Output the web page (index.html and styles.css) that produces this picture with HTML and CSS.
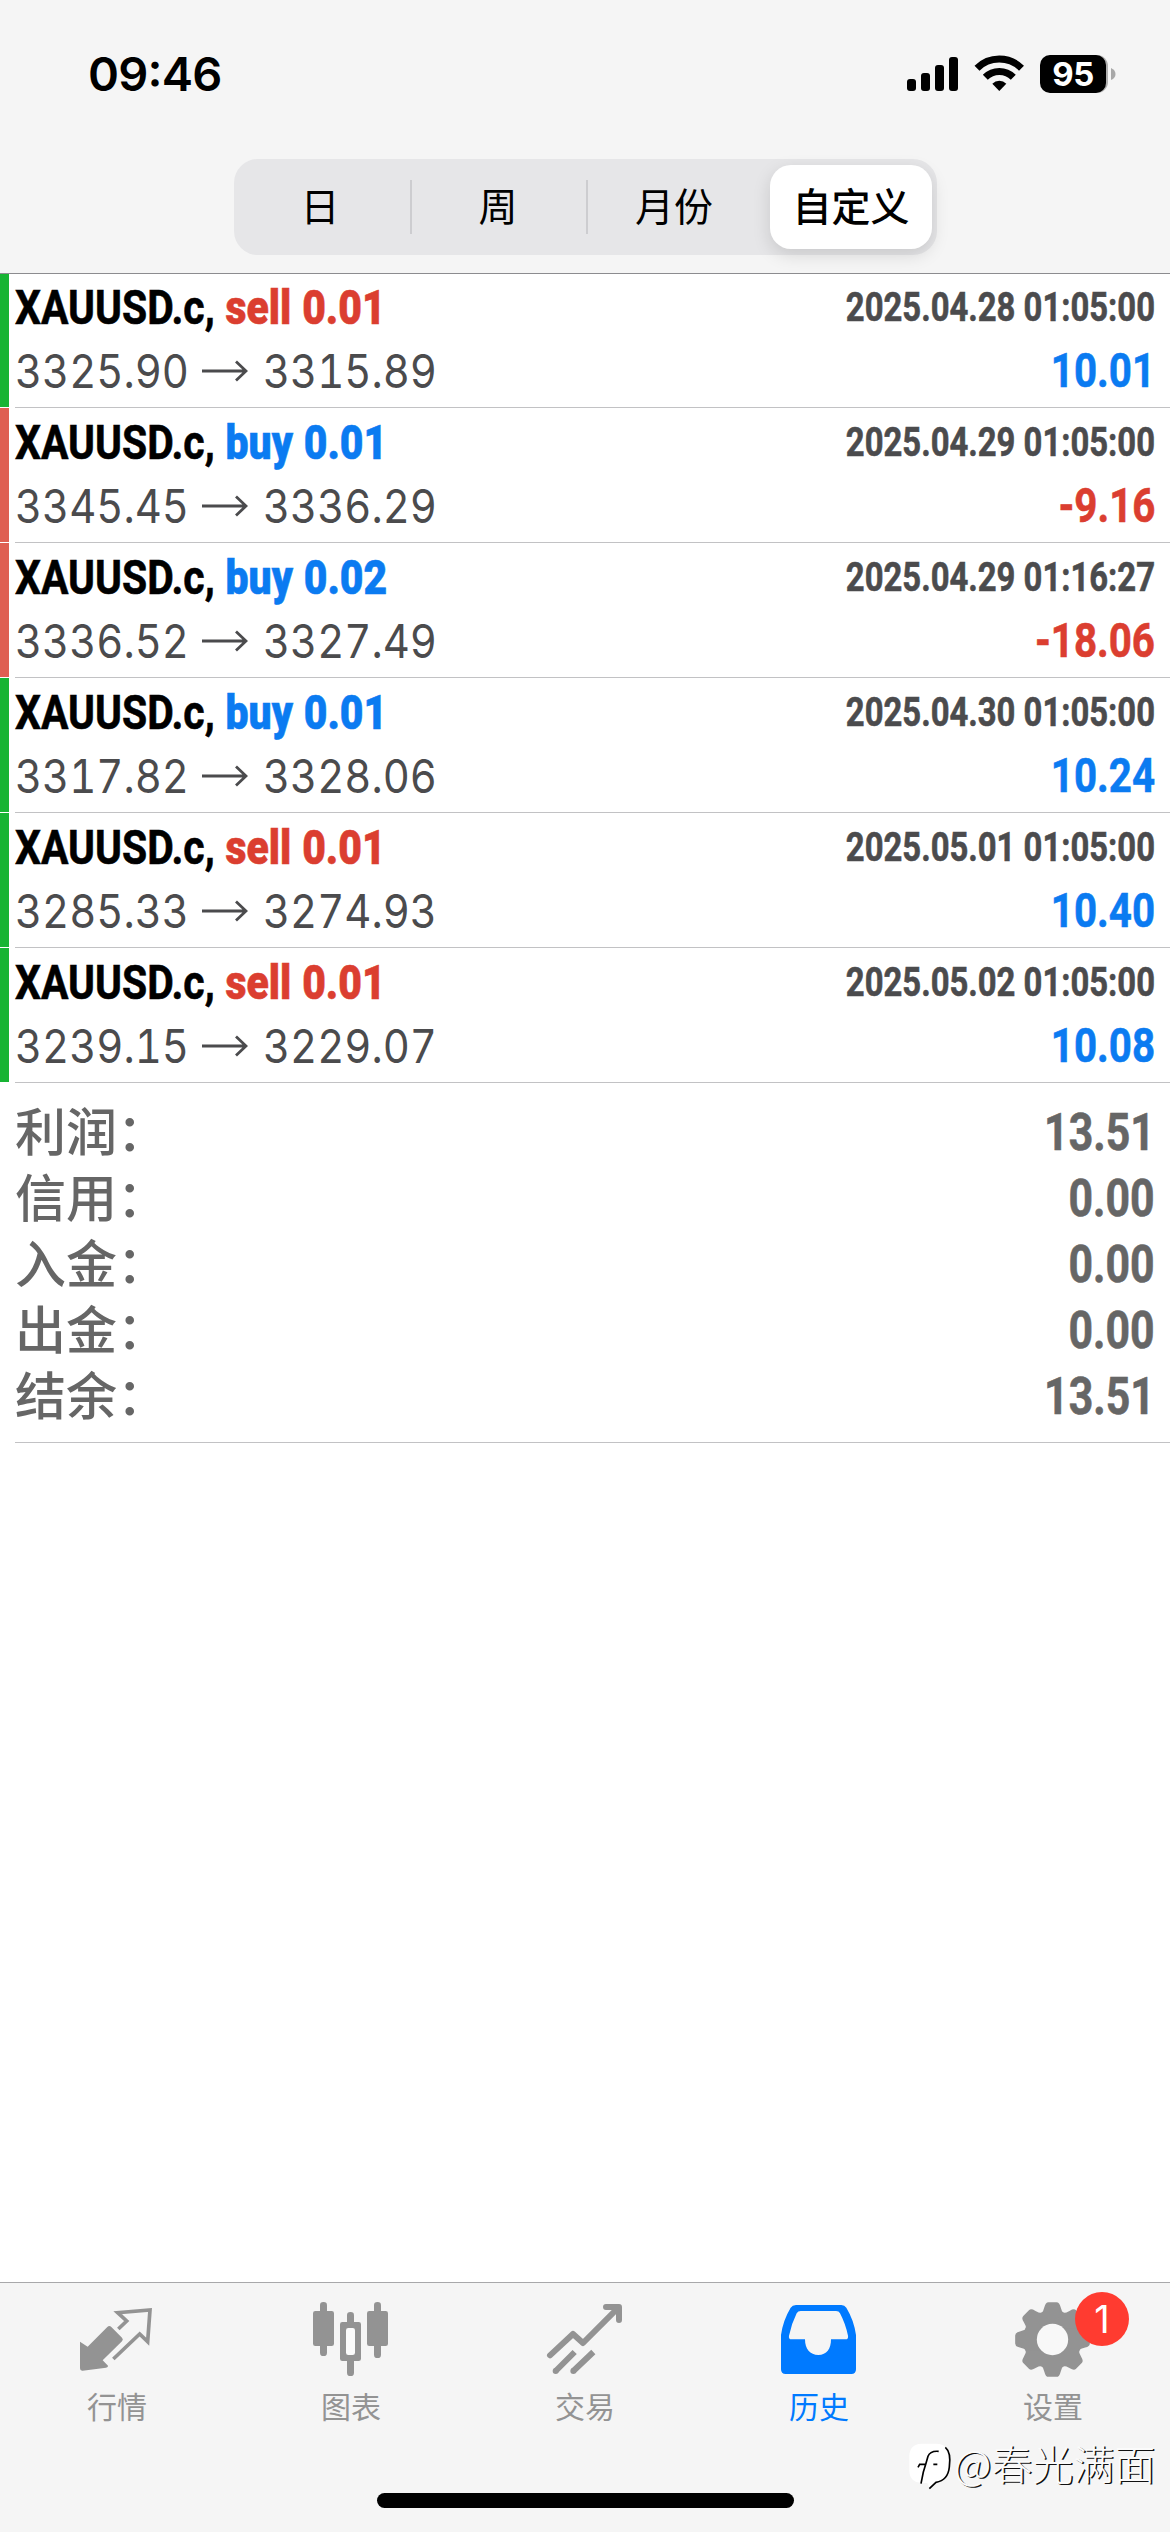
FILE: index.html
```html
<!DOCTYPE html>
<html lang="zh-CN">
<head>
<meta charset="utf-8">
<title>历史</title>
<link rel="stylesheet" href="styles.css">
</head>
<body>
<div class="screen">
  <header class="top">
    <div class="status">
      <span class="clock">09:46</span>
      <svg class="status-icons" width="210" height="40" viewBox="906 54 210 40">
        <rect x="907" y="79" width="9" height="12" rx="3"/>
        <rect x="921" y="73" width="9" height="18" rx="3"/>
        <rect x="935" y="65" width="9" height="26" rx="3"/>
        <rect x="949" y="57" width="9" height="34" rx="3"/>
        <g fill="none" stroke="#000" stroke-width="7">
          <path d="M977 68.200a31.500 31.500 0 0 1 44.500 0"/>
          <path d="M985.300 77.200a19.800 19.800 0 0 1 28 0"/>
        </g>
        <path d="M999.300 91l-7-7.300a10 10 0 0 1 14 0z"/>
        <rect x="1042" y="55" width="66" height="38" rx="11" fill="#b0b0b0"/>
        <rect x="1040" y="55" width="66" height="38" rx="10"/>
        <path d="M1111 68q4.500 2 4.500 6t-4.500 6z" fill="#a8a8a8"/>
        <text class="battery" x="1073" y="86" text-anchor="middle">95</text>
      </svg>
    </div>
    <nav class="segments">
      <span class="segment">日</span>
      <span class="segment ruled">周</span>
      <span class="segment ruled">月份</span>
      <span class="segment selected">自定义</span>
    </nav>
  </header>

  <main class="history">
    <section class="deal gain">
      <div class="line"><h2 class="symbol">XAUUSD.c, <b class="sell">sell 0.01</b></h2><time class="time">2025.04.28 01:05:00</time></div>
      <div class="line"><p class="prices"><span>3325.90</span><svg class="arrow" viewBox="0 0 46 22"><path d="M0 11H44M34 1.500L44 11L34 20.500"/></svg><span>3315.89</span></p><strong class="profit up">10.01</strong></div>
    </section>
    <section class="deal loss">
      <div class="line"><h2 class="symbol">XAUUSD.c, <b class="buy">buy 0.01</b></h2><time class="time">2025.04.29 01:05:00</time></div>
      <div class="line"><p class="prices"><span>3345.45</span><svg class="arrow" viewBox="0 0 46 22"><path d="M0 11H44M34 1.500L44 11L34 20.500"/></svg><span>3336.29</span></p><strong class="profit down">-9.16</strong></div>
    </section>
    <section class="deal loss">
      <div class="line"><h2 class="symbol">XAUUSD.c, <b class="buy">buy 0.02</b></h2><time class="time">2025.04.29 01:16:27</time></div>
      <div class="line"><p class="prices"><span>3336.52</span><svg class="arrow" viewBox="0 0 46 22"><path d="M0 11H44M34 1.500L44 11L34 20.500"/></svg><span>3327.49</span></p><strong class="profit down">-18.06</strong></div>
    </section>
    <section class="deal gain">
      <div class="line"><h2 class="symbol">XAUUSD.c, <b class="buy">buy 0.01</b></h2><time class="time">2025.04.30 01:05:00</time></div>
      <div class="line"><p class="prices"><span>3317.82</span><svg class="arrow" viewBox="0 0 46 22"><path d="M0 11H44M34 1.500L44 11L34 20.500"/></svg><span>3328.06</span></p><strong class="profit up">10.24</strong></div>
    </section>
    <section class="deal gain">
      <div class="line"><h2 class="symbol">XAUUSD.c, <b class="sell">sell 0.01</b></h2><time class="time">2025.05.01 01:05:00</time></div>
      <div class="line"><p class="prices"><span>3285.33</span><svg class="arrow" viewBox="0 0 46 22"><path d="M0 11H44M34 1.500L44 11L34 20.500"/></svg><span>3274.93</span></p><strong class="profit up">10.40</strong></div>
    </section>
    <section class="deal gain">
      <div class="line"><h2 class="symbol">XAUUSD.c, <b class="sell">sell 0.01</b></h2><time class="time">2025.05.02 01:05:00</time></div>
      <div class="line"><p class="prices"><span>3239.15</span><svg class="arrow" viewBox="0 0 46 22"><path d="M0 11H44M34 1.500L44 11L34 20.500"/></svg><span>3229.07</span></p><strong class="profit up">10.08</strong></div>
    </section>
    <dl class="summary">
      <div class="total"><dt>利润：</dt><dd>13.51</dd></div>
      <div class="total"><dt>信用：</dt><dd>0.00</dd></div>
      <div class="total"><dt>入金：</dt><dd>0.00</dd></div>
      <div class="total"><dt>出金：</dt><dd>0.00</dd></div>
      <div class="total"><dt>结余：</dt><dd>13.51</dd></div>
    </dl>
  </main>

  <footer class="bottom">
    <nav class="tabs">
      <a class="tab">
        <svg class="icon" viewBox="114 90 234 234">
          <path fill="currentColor" d="M120 215L143 230L202 171Q208 165 214 171L246 203Q251 208 246 214L188 271L204 287Q205 292 198 293L128 302Q120 303 120 295z"/>
          <path fill="none" stroke="currentColor" stroke-width="11" d="M235 177L260 153L233 128L330 120L323 215L299 192L220 267"/>
        </svg>
        <span>行情</span>
      </a>
      <a class="tab">
        <svg class="icon" viewBox="816 90 234 234" fill="currentColor">
          <rect x="840" y="96" width="21" height="162" rx="10"/><rect x="819" y="123" width="63" height="105" rx="7"/>
          <rect x="1002" y="96" width="21" height="168" rx="10"/><rect x="981" y="123" width="63" height="105" rx="7"/>
          <rect x="921" y="126" width="21" height="50" rx="10"/><rect x="921" y="255" width="21" height="63" rx="10"/>
          <rect x="900" y="156" width="63" height="117" rx="7"/><rect x="918" y="174" width="27" height="81" rx="7" fill="#fbfbfb"/>
        </svg>
        <span>图表</span>
      </a>
      <a class="tab">
        <svg class="icon" viewBox="138 90 234 234" fill="none" stroke="currentColor" stroke-width="18" stroke-linecap="round" stroke-linejoin="round">
          <path d="M150 256L219 192L249 219L355 113M318 111H357V150"/>
          <path d="M167 303L224 246M220 303L280 246" stroke-linecap="butt"/>
          <path d="M167 303h.1M220 303h.1"/>
        </svg>
        <span>交易</span>
      </a>
      <a class="tab active">
        <svg class="icon" viewBox="840 90 234 234" fill="currentColor">
          <path fill-rule="evenodd" d="M888 105H1024Q1034 105 1039 113Q1062 151 1068 195V298Q1068 312 1054 312H857Q843 312 843 298V195Q849 151 872 113Q877 105 888 105zM902 123Q894 123 890 130Q875 160 867 197Q865 208 875 208H915C915 237 930 255 955 255S993 237 993 208H1036Q1046 208 1044 197Q1036 160 1020 130Q1017 123 1008 123z"/>
        </svg>
        <span>历史</span>
      </a>
      <a class="tab">
        <svg class="icon" viewBox="432 90 234 234">
          <g fill="currentColor" transform="translate(547.500 208.500)">
            <circle r="88"/>
            <path id="tooth" d="M-34 -78Q-27 -84 -24 -98Q-21 -112 -12 -112H12Q21 -112 24 -98Q27 -84 34 -78V78Q27 84 24 98Q21 112 12 112H-12Q-21 112 -24 98Q-27 84 -34 78z"/>
            <use href="#tooth" transform="rotate(45)"/>
            <use href="#tooth" transform="rotate(90)"/>
            <use href="#tooth" transform="rotate(135)"/>
          </g>
          <circle cx="547.500" cy="208.500" r="47" fill="#f8f8f8"/>
        </svg>
        <span>设置</span>
        <i class="badge">1</i>
      </a>
    </nav>
    <div class="home"></div>
    <div class="watermark">
      <svg class="mark" viewBox="114 525 135 144">
        <path fill="#fff" d="M155 530H200Q236 532 236 568V600Q236 640 200 645L178 664L172 648H155Q118 646 118 610V568Q118 532 155 530z"/>
        <path fill="none" stroke="#000" stroke-width="5" d="M226 541Q244 556 238 600Q234 640 198 646L178 665M206 553Q180 551 174 568Q168 590 160 615L153 650M144 601L149 592H167M190 592H202"/>
      </svg>
      <span>@春光满面</span>
    </div>
  </footer>
</div>
</body>
</html>
```
FILE: styles.css
```css
* { box-sizing: border-box; margin: 0; padding: 0; }

body {
  background: #fff;
  font-family: "Liberation Sans", "Noto Sans CJK SC", sans-serif;
}

.screen {
  display: flex;
  flex-direction: column;
  width: 1170px;
  height: 2532px;
  overflow: hidden;
}

.top {
  height: 274px;
  background: #f5f5f5;
  border-bottom: 1px solid #8c8c8f;
}

.status {
  display: flex;
  justify-content: space-between;
  height: 159px;
  padding: 54px 54px 0 88px;
}

.clock {
  font: 600 47px/40px Inter, sans-serif;
  letter-spacing: -.8px;
  font-feature-settings: "case";
}

.battery { font: 700 33px Inter, sans-serif; fill: #fff; letter-spacing: -.5px; }

.segments {
  display: flex;
  width: 703px;
  height: 96px;
  margin-left: 234px;
  padding: 6px 5px 6px 0;
  border-radius: 24px;
  background: #e6e6e8;
}

.segment {
  flex: 0 0 176px;
  display: flex;
  align-items: center;
  justify-content: center;
  padding-bottom: 5px;
  font: 400 39px/79px "Noto Sans CJK SC", sans-serif;
}

.segment:first-child { padding-right: 4px; }

.ruled {
  background: linear-gradient(#cdcdd0, #cdcdd0) 0 15px / 2px 54px no-repeat;
}

.selected {
  flex: 0 0 162px;
  margin-left: auto;
  border-radius: 21px;
  background: #fff;
  box-shadow: 0 6px 18px rgba(0, 0, 0, .13);
  font-weight: 500;
}

.history { flex: 1; }

.deal {
  height: 134px;
  margin-bottom: 1px;
  padding: 13px 15px 0 6px;
  border-left: 9px solid;
  box-shadow: 15px 1px 0 #fff, 15px 1px 0 #c2c2c4;
  clip-path: inset(0 0 -1px 0);
}

.deal:first-child { height: 133px; padding-top: 12px; }
.gain { border-color: #17b433; }
.loss { border-color: #df5f52; }

.deal { box-shadow: 15px 1px 0 #c2c2c4; background: #fff; }

.line {
  display: flex;
  justify-content: space-between;
  height: 63px;
  line-height: 44px;
}

.symbol, .time, .profit, .summary dd {
  font-family: Roboto, "Liberation Sans", sans-serif;
  font-weight: 700;
  white-space: nowrap;
  -webkit-text-stroke: .6px currentColor;
}

.symbol {
  font-size: 48px;
  word-spacing: .8px;
  transform: scaleX(.852);
  transform-origin: left;
}

.sell { color: #db3e30; }
.buy { color: #0b7bf1; }

.time {
  font-size: 40px;
  line-height: 43px;
  color: #4b4b4d;
  transform: scaleX(.82);
  transform-origin: right;
}

.prices {
  display: flex;
  align-items: center;
  height: 44px;
  font-family: Inter, sans-serif;
  font-size: 47px;
  font-feature-settings: "tnum";
  line-height: 42px;
  color: #4b4b4d;
}

.prices span {
  width: 173px;
  transform: scaleX(.89);
  transform-origin: left;
}

.arrow {
  width: 46px;
  height: 22px;
  margin: 0 15px 0 14px;
  fill: none;
  stroke: currentColor;
  stroke-width: 2.8;
}

.profit { font-size: 48px; transform: scaleX(.84); transform-origin: right; }
.up { color: #0b7bf1; }
.down { color: #db3e30; }

.summary {
  height: 360px;
  margin-left: 15px;
  padding: 16px 15px 0 0;
  border-bottom: 1px solid #c2c2c4;
  color: #666;
}

.total {
  display: flex;
  justify-content: space-between;
  height: 66px;
  line-height: 66px;
}

.total dt {
  font-family: "Noto Sans CJK SC", sans-serif;
  font-size: 51px;
  font-weight: 500;
  line-height: 60px;
}

.total dd {
  font-size: 51px;
  line-height: 67px;
  transform: scaleX(.84);
  transform-origin: right;
}

.bottom {
  position: relative;
  height: 250px;
  border-top: 1px solid #a8a8aa;
  background: #f5f5f5;
}

.tabs { display: flex; height: 210px; }

.tab {
  position: relative;
  flex: 1;
  display: flex;
  flex-direction: column;
  align-items: center;
  padding-top: 17px;
  color: #939393;
  font: 400 30px/40px "Noto Sans CJK SC", sans-serif;
}

.tab span { margin-top: 7px; }
.tab.active { color: #007aff; }
.icon { width: 78px; height: 78px; }

.badge {
  position: absolute;
  left: 139px;
  top: 9px;
  width: 54px;
  height: 54px;
  border-radius: 50%;
  background: #ff3b30;
  color: #fff;
  font: 400 38px/54px Inter, sans-serif;
  text-align: center;
}

.home {
  width: 417px;
  height: 15px;
  margin: 0 auto;
  border-radius: 8px;
  background: #000;
}

.watermark {
  position: absolute;
  left: 908px;
  top: 149px;
  display: flex;
  align-items: center;
  color: #fbfbfb;
  font: 300 41px/60px "Noto Sans CJK SC", sans-serif;
  text-shadow: 1.5px 1px 0 #111;
  white-space: nowrap;
}

.mark { width: 45px; height: 48px; margin: 8px 1px 0 0; }
```
